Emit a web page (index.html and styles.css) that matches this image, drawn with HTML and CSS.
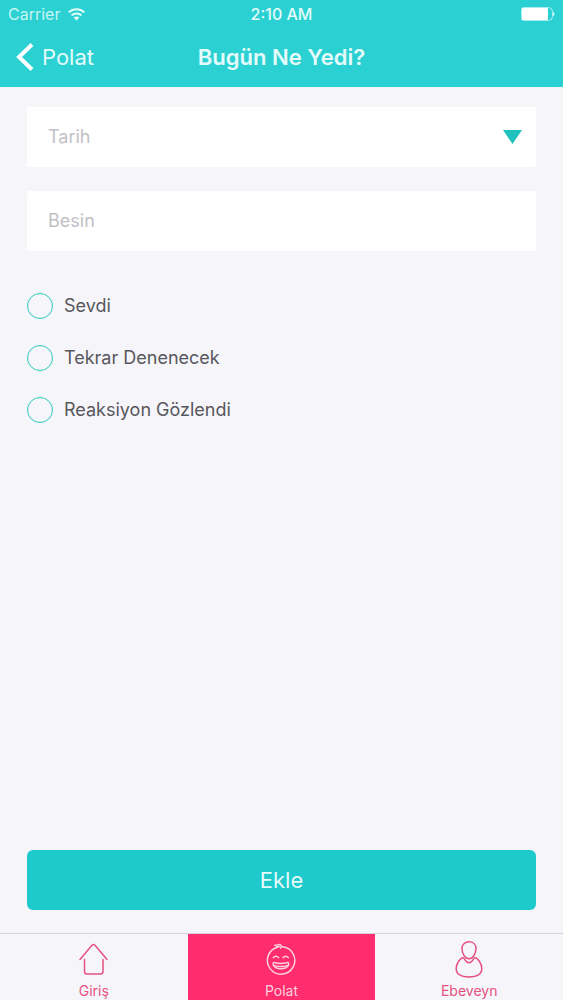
FILE: index.html
```html
<!DOCTYPE html>
<html lang="tr">
<head>
<meta charset="utf-8">
<meta name="viewport" content="width=device-width, initial-scale=1">
<title>Bugün Ne Yedi?</title>
<link rel="stylesheet" href="styles.css">
</head>
<body>
<div class="app">
  <header class="header">
    <div class="status">
      <div class="carrier">
        <span>Carrier</span>
        <svg class="wifi" width="17" height="13" viewBox="0 0 17 13" fill="none" stroke="currentColor" stroke-width="2" aria-hidden="true">
          <path d="M.7 4.300C5 .2 12 .2 16.300 4.300"/>
          <path d="M3.500 7.400c2.800-2.700 7.200-2.700 10 0"/>
          <path d="M8.500 12.600 5.600 9.600c1.500-1.600 4.300-1.600 5.800 0z" fill="currentColor" stroke="none"/>
        </svg>
      </div>
      <time class="time">2:10 AM</time>
      <svg class="battery" width="34" height="14" viewBox="0 0 34 14" aria-hidden="true">
        <path d="M2.500 .5h25a4 4 0 0 1 4 4v5a4 4 0 0 1-4 4h-25a2 2 0 0 1-2-2v-9a2 2 0 0 1 2-2z" fill="none" stroke="#a5eeed"/>
        <rect x="1" y="1" width="26" height="12" rx="1" fill="#fff"/>
        <path d="M32 4.500q3 2.500 0 5z" fill="#d5f8f7"/>
      </svg>
    </div>
    <nav class="navbar">
      <a class="back" href="#">
        <svg width="18" height="28" viewBox="0 0 18 28" fill="none" stroke="#fff" stroke-width="4" aria-hidden="true"><path d="M16 1.500 3 14l13 12.500"/></svg>
        <span>Polat</span>
      </a>
      <h1 class="title">Bugün Ne Yedi?</h1>
    </nav>
  </header>

  <form class="form">
    <div class="fields">
      <div class="select-box">
        <select class="field select" aria-label="Tarih">
          <option>Tarih</option>
        </select>
        <svg class="caret" width="19" height="14" viewBox="0 0 19 14" aria-hidden="true"><path d="M0 0h19L9.500 14z" fill="#1fc1bf"/></svg>
      </div>
      <input class="field" type="text" placeholder="Besin" aria-label="Besin">
    </div>
    <div class="choices">
      <label class="choice"><input class="radio" type="radio" name="result">Sevdi</label>
      <label class="choice"><input class="radio" type="radio" name="result">Tekrar Denenecek</label>
      <label class="choice"><input class="radio" type="radio" name="result">Reaksiyon Gözlendi</label>
    </div>
    <button class="submit" type="button">Ekle</button>
  </form>

  <nav class="tabs">
    <a class="tab" href="#">
      <svg class="tab-icon" width="32" height="40" viewBox="0 0 32 40" fill="none" stroke="currentColor" stroke-width="1.500" stroke-linecap="round" stroke-linejoin="round" aria-hidden="true">
        <path d="M2 18.500 13.800 4.500Q15.500 2.500 17.200 4.500L29 18.500"/>
        <path d="M6.500 18.500V30.500q0 2.500 2.500 2.500h13.500q2.500 0 2.500-2.500V18.500"/>
      </svg>
      <span>Giriş</span>
    </a>
    <a class="tab active" href="#" aria-current="page">
      <svg class="tab-icon" width="32" height="40" viewBox="0 0 32 40" fill="none" stroke="currentColor" stroke-width="1.500" stroke-linecap="round" stroke-linejoin="round" aria-hidden="true">
        <path d="M12.500 6.200A13.700 13.700 0 1 0 17.500 5.800"/>
        <path d="M9.800 4.200c1.800.8 3.600-1.400 5.400-.6 1.700.8 1.500 2.600.3 3.600M11.500 5.800c1.300.2 2-.5 3-.2"/>
        <path d="M8.300 16.600q2.700-2.600 5.200 0M18 16.600q2.700-2.600 5.200 0"/>
        <path d="M8 22.700c0-1.100.9-1.300 2-1 3.800 1 8 1 11.800 0 1.100-.3 2 0 2 1 0 3-3.600 5.100-7.900 5.100S8 25.700 8 22.700z"/>
        <path d="M9.500 24.600c3.800 1.200 9 1.200 12.800 0"/>
      </svg>
      <span>Polat</span>
    </a>
    <a class="tab" href="#">
      <svg class="tab-icon" width="32" height="40" viewBox="0 0 32 40" fill="none" stroke="currentColor" stroke-width="1.500" stroke-linecap="round" stroke-linejoin="round" aria-hidden="true">
        <path d="M16 .8c4.200 0 7 2.800 7 6.600C23 12 20.200 17.800 16 17.800S9 12 9 7.400C9 3.600 11.800.8 16 .8z"/>
        <path d="M10 16.800c1.500 0 2.200 5 6 5s4.500-5 6-5c2.600 0 6.800 5.700 6.800 10.800 0 6.300-5.800 8.400-12.800 8.400s-12.800-2.100-12.800-8.400c0-5.100 4.200-10.800 6.800-10.800z"/>
      </svg>
      <span>Ebeveyn</span>
    </a>
  </nav>
</div>
</body>
</html>
```
FILE: styles.css
```css
* {
  box-sizing: border-box;
}

body {
  margin: 0;
  background: #f6f5fa;
  color: #58575c;
  font-family: Inter, "Liberation Sans", sans-serif;
}

a {
  color: inherit;
  text-decoration: none;
}

.app {
  display: flex;
  flex-direction: column;
  min-height: 100vh;
}

.header {
  background: #2bd1d2;
  color: #e4fbfb;
}

.status {
  display: grid;
  grid-template-columns: 1fr auto 1fr;
  align-items: center;
  height: 28px;
  padding: 0 8px;
  font-size: 16px;
}

.carrier {
  display: flex;
  align-items: center;
  gap: 8px;
  color: #c5f5f4;
}

.wifi {
  color: #e4fbfb;
}

.time {
  font-weight: 500;
}

.battery {
  justify-self: end;
}

.navbar {
  display: grid;
  grid-template-columns: 1fr auto 1fr;
  align-items: center;
  height: 59px;
  padding: 0 16px 2px;
}

.back {
  display: flex;
  align-items: center;
  gap: 8px;
  font-size: 22px;
}

.title {
  margin: 0;
  font-size: 22px;
  font-weight: 600;
}

.form {
  display: flex;
  flex: 1;
  flex-direction: column;
  padding: 20px 27px 23px;
}

.fields {
  display: flex;
  flex-direction: column;
  gap: 24px;
}

.select-box {
  display: grid;
  align-items: center;
}

.select-box > * {
  grid-area: 1 / 1;
}

.field {
  width: 100%;
  height: 60px;
  padding: 0 21px 2px;
  border: 0;
  border-radius: 2px;
  background: #fff;
  color: #58575c;
  font-family: inherit;
  font-size: 18px;
}

.field::placeholder {
  color: #c2c0c6;
  opacity: 1;
}

.select {
  appearance: none;
  color: #c2c0c6;
}

.caret {
  justify-self: end;
  margin-right: 14px;
  pointer-events: none;
}

.choices {
  display: flex;
  flex-direction: column;
  gap: 26px;
  padding: 42px 0;
}

.choice {
  display: flex;
  align-items: center;
  gap: 11px;
  font-size: 18px;
  line-height: 26px;
}

.radio {
  width: 26px;
  height: 26px;
  margin: 0;
  border: 1px solid #2cc9bb;
  border-radius: 50%;
  appearance: none;
}

.radio:checked {
  background: #2bd1d2;
}

.submit {
  height: 60px;
  margin-top: auto;
  border: 0;
  border-radius: 6px;
  background: #1ecacc;
  color: #e4fbfb;
  font-family: inherit;
  font-size: 22px;
}

.tabs {
  display: grid;
  grid-template-columns: repeat(3, 1fr);
  border-top: 1px solid #d5d3d9;
}

.tab {
  display: flex;
  flex-direction: column;
  align-items: center;
  padding: 7px 0 0;
  color: #e5527f;
  font-size: 14px;
  line-height: 19px;
}

.active {
  background: #ff2d6e;
  color: #ffd0df;
}

.tab-icon {
  flex: none;
}
```
